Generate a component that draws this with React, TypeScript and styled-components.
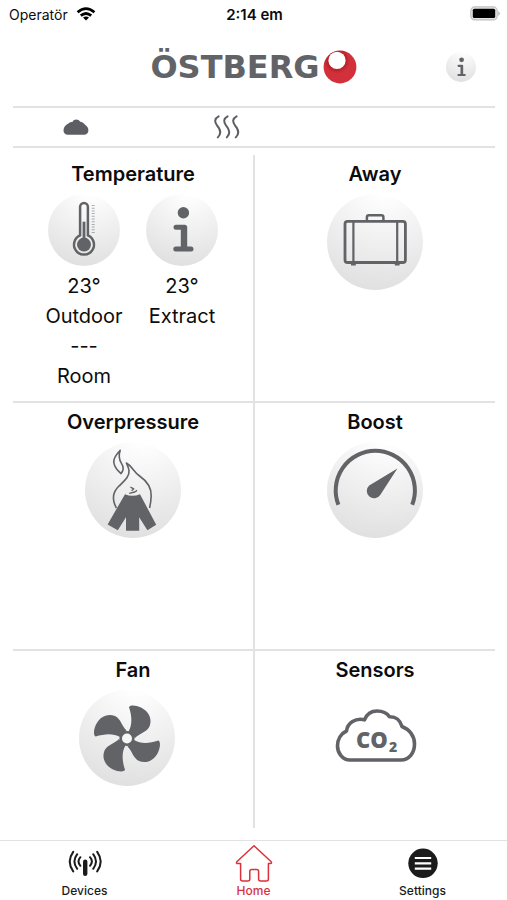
import React from "react";
import styled, { createGlobalStyle } from "styled-components";

const ink = "#626366";
const line = "#e2e2e2";
const red = "#d9323b";

const GlobalStyle = createGlobalStyle`
  *, *::before, *::after { box-sizing: border-box; }
  body {
    margin: 0;
    background: #fff;
    color: #0c0c0d;
    font-family: Inter, "Liberation Sans", sans-serif;
  }
  button { font: inherit; color: inherit; }
  svg { display: block; }
`;

const Screen = styled.div`
  display: flex;
  flex-direction: column;
  min-height: 100vh;
  background: #fff;
`;

const StatusBar = styled.div`
  display: grid;
  grid-template-columns: 1fr auto 1fr;
  align-items: center;
  height: 28px;
  padding: 0 7px 0 9px;
  font-size: 14px;
`;

const Carrier = styled.div`
  display: flex;
  align-items: center;
  gap: 8px;
`;

const Time = styled.time`
  font-size: 15px;
  font-weight: 600;
`;

const BatterySlot = styled.div`
  justify-self: end;
`;

const Header = styled.header`
  display: grid;
  grid-template-columns: 1fr auto 1fr;
  align-items: center;
  height: 78px;
  padding: 0 31px;
`;

const Logo = styled.h1`
  display: flex;
  align-items: center;
  gap: 3px;
  grid-column: 2;
  margin: 0;
  color: ${ink};
  font: bold 32px/34px "DejaVu Sans", sans-serif;
`;

const Disc = styled.span<{ $size: number; $plain?: boolean }>`
  display: block;
  width: ${(p) => p.$size}px;
  height: ${(p) => p.$size}px;
  border-radius: 50%;
  background: ${(p) =>
    p.$plain ? "none" : "radial-gradient(circle at 60% -10%, #fff 8%, #f0f0f1 48%, #dadadb 104%)"};
`;

const DiscButton = styled(Disc).attrs({ as: "button", type: "button" })`
  padding: 0;
  border: 0;
  cursor: pointer;
`;

const InfoSlot = styled.div`
  justify-self: end;
`;

const Main = styled.main`
  padding: 0 12px 0 13px;
`;

const Indicators = styled.div`
  display: flex;
  align-items: center;
  gap: 125px;
  height: 42px;
  padding-left: 50px;
  border-top: 2px solid ${line};
  border-bottom: 2px solid ${line};
`;

const Tiles = styled.div`
  display: grid;
  grid-template-columns: 1fr 1fr;
  gap: 2px;
  margin-top: 7px;
  background: ${line};
`;

const Tile = styled.section<{ $last?: boolean }>`
  display: flex;
  flex-direction: column;
  align-items: center;
  gap: 5px;
  min-height: ${(p) => (p.$last ? 177 : 246)}px;
  padding-top: 4px;
  background: #fff;
`;

const TileTitle = styled.h2`
  margin: 0;
  font-size: 20px;
  line-height: 30px;
  font-weight: 600;
`;

const FanRow = styled.div`
  padding-right: 12px;
`;

const Readings = styled.div`
  display: grid;
  grid-template-columns: 98px 98px;
`;

const Sensor = styled.div`
  display: flex;
  flex-direction: column;
  align-items: center;
`;

const Values = styled.div`
  margin-top: 5px;
  font-size: 20px;
  line-height: 30px;
  text-align: center;
`;

const TabBar = styled.nav`
  display: grid;
  grid-template-columns: repeat(3, 1fr);
  margin-top: auto;
  padding-top: 3px;
  border-top: 1px solid ${line};
`;

const Tab = styled.button<{ $active?: boolean }>`
  display: flex;
  flex-direction: column;
  align-items: center;
  padding: 0;
  border: 0;
  background: none;
  color: ${(p) => (p.$active ? red : "#1b1b1c")};
  font-size: 12px;
  line-height: 18px;
  font-weight: 500;
  cursor: pointer;
`;

const Wifi = () => (
  <svg width="20" height="14" viewBox="0 0 20 14" fill="none" stroke="#000" strokeWidth="2.8" aria-hidden="true">
    <path d="M1.6 5.2Q10 -2 18.4 5.2" />
    <path d="M4.8 8.7Q10 4.4 15.2 8.7" />
    <path d="M10 13.4L7 10.6Q10 8.3 13 10.6Z" fill="#000" stroke="none" />
  </svg>
);

const Battery = () => (
  <svg width="30" height="16" viewBox="0 0 30 16" aria-label="Battery full">
    <rect x="0.8" y="0.9" width="26.4" height="13" rx="4" fill="#e4e4e4" stroke="#c0c0c0" strokeWidth="1.2" />
    <rect x="2.8" y="2.7" width="22.4" height="9.4" rx="1.6" fill="#000" />
    <path d="M28.4 5Q31 7.4 28.4 9.9Z" fill="#a8a8a8" />
  </svg>
);

const Ball = () => (
  <svg width="34" height="34" viewBox="0 0 34 34" aria-hidden="true">
    <defs>
      <radialGradient id="ball" cx="0.4" cy="0.3" r="0.4">
        <stop offset="0.6" stopColor="#b01d25" />
        <stop offset="1" stopColor="#d2303a" />
      </radialGradient>
    </defs>
    <circle cx="17" cy="17" r="16.4" fill="url(#ball)" />
    <circle cx="14" cy="10.4" r="8.6" fill="#fff" />
  </svg>
);

const InfoGlyph = ({ size }: { size: number }) => (
  <svg width={size} height={size} viewBox="0 0 72 72" fill="none" stroke={ink} aria-hidden="true">
    <circle cx="37.4" cy="18.8" r="5.7" fill={ink} stroke="none" />
    <path d="M30 33.2H38.6M29.8 55H45" strokeWidth="5" strokeLinecap="round" />
    <path d="M38 32.6V55" strokeWidth="6.4" />
  </svg>
);

const Thermometer = () => (
  <svg width="72" height="72" viewBox="0 0 72 72" fill="none" stroke={ink} aria-hidden="true">
    <path d="M32.1 41.4V12.8a3.9 3.9 0 0 1 7.8 0V41.4A10 10 0 1 1 32.1 41.4Z" strokeWidth="2.5" />
    <circle cx="36" cy="50.6" r="7" fill={ink} stroke="none" />
    <path d="M36 27.7V46" strokeWidth="2.8" />
    <path d="M45.2 11V39" strokeWidth="3" strokeDasharray="1 1.7" opacity="0.5" />
  </svg>
);

const Suitcase = () => (
  <svg width="96" height="96" viewBox="0 0 96 96" fill="none" stroke={ink} aria-hidden="true">
    <rect x="18" y="27.3" width="60.4" height="41.2" rx="2.6" strokeWidth="2.8" />
    <path d="M26.4 27.5V68.5M70.2 27.5V68.5" strokeWidth="2.2" />
    <path d="M39.9 26.6V23.2a2 2 0 0 1 2-2H54.4a2 2 0 0 1 2 2V26.6" strokeWidth="2.5" />
    <path d="M24 70.5H28.8M67.8 70.5H72.6" strokeWidth="1.8" />
  </svg>
);

const Campfire = () => (
  <svg width="96" height="96" viewBox="0 0 96 96" fill="none" stroke={ink} strokeWidth="1.6" strokeLinejoin="round" aria-hidden="true">
    <path d="M35.2 8.2C33 11 28.6 14.5 28.8 20C29 26 33.5 28.8 35.8 31.6C38.2 29 39 25.2 36.6 21.6C33.8 17.4 33.4 13.5 35.2 8.2Z" />
    <path d="M31.4 66C26.5 57 28.5 49.5 33.5 44.5C38.5 39.5 44.8 35 44 28.5C43.7 25.5 42.4 23.2 41.4 21C47 24 48.5 29.5 54 33.5C61.5 38.8 66.6 46.5 66.2 54C66 59 65.3 63 64.6 66" />
    <path d="M45.4 45.2L48.8 46.8L46.6 48.8M44.2 51.4L49.8 50L52 48.4" strokeWidth="1.3" />
    <path
      d="M40 52.2Q47.5 55.2 55 52.2L71.2 82.8L62.4 88.2L54.2 75.2V88.8H41V75.2L32.8 88.2L22.6 82.4Z"
      fill={ink}
      stroke="none"
    />
  </svg>
);

const Gauge = () => (
  <svg width="96" height="96" viewBox="0 0 96 96" aria-hidden="true">
    <path d="M11.4 62.8A39.6 39.6 0 1 1 85.2 62.8" fill="none" stroke={ink} strokeWidth="4" />
    <path d="M70.4 26.6L53.2 53A7.3 7.3 0 1 1 42.2 43.6Z" fill={ink} />
  </svg>
);

const Fan = () => (
  <svg width="96" height="96" viewBox="0 0 96 96" aria-hidden="true">
    {[0, 90, 180, 270].map((angle) => (
      <path
        key={angle}
        transform={`rotate(${angle} 48 48.5)`}
        d="M50 17.2C50.6 14.8 57 15 62 17.5C70 21.5 73.5 29 70.5 36.5C67.5 42.5 60 43.5 56 48L49.5 41.5C53.5 35 53 26 50 17.2Z"
        fill={ink}
      />
    ))}
    <circle cx="48" cy="48.5" r="7.6" fill={ink} />
    <circle cx="48" cy="48.5" r="5" fill="#f6f6f6" />
  </svg>
);

const CarbonDioxide = () => (
  <svg width="96" height="96" viewBox="0 0 96 96" aria-hidden="true">
    <path
      d="M23 70C15 70 10.5 62.5 10.5 56C10.5 49.5 14 43.5 19.5 41C20.5 33 28.5 27.5 37.5 29.8C40 23.5 45 21 50 21C55.5 21 60 23 62.5 26.8C69 26.5 73.5 31 75 36.5C82.5 39.5 87.5 46 87.5 54C87.5 63 82 70 74 70Z"
      fill="none"
      stroke={ink}
      strokeWidth="3.6"
      strokeLinejoin="round"
    />
    <g fill={ink} fontFamily="'Open Sans', 'Noto Sans', sans-serif" fontWeight="800">
      <text x="29" y="58" fontSize="22">CO</text>
      <text x="62" y="62" fontSize="14">2</text>
    </g>
  </svg>
);

const Cloud = () => (
  <svg width="26" height="16" viewBox="0 0 26 16" fill="#5d5e64" aria-label="Outdoor air">
    <path d="M5 15.8C2.2 15.8 0.5 13.8 0.5 11.4C0.5 8 3 5.6 5.8 4.2C7 3.2 8.2 3 9.4 3C10.4 1.2 11.6 0.5 13.2 0.5C14.8 0.5 16.2 1.2 17.2 2.8C19.4 3 20.8 4 21.8 5.6C24 7 25.4 9 25.4 11.4C25.4 13.8 23.6 15.8 21 15.8Z" />
  </svg>
);

const Heat = () => (
  <svg width="26" height="24" viewBox="0 0 26 24" fill="none" stroke="#5d5e64" strokeWidth="2" strokeLinecap="round" aria-label="Heating">
    {[0, 9, 18].map((x) => (
      <path key={x} transform={`translate(${x} 0)`} d="M4.6 1.4C0.4 3.6 0.4 7 3 10.4C6.6 14.6 8 18.4 3.8 22.4" />
    ))}
  </svg>
);

const Antenna = () => (
  <svg width="40" height="38" viewBox="0 0 40 38" fill="none" stroke="currentColor" strokeWidth="2" strokeLinecap="round" aria-hidden="true">
    <path d="M8.2 7.8Q1.2 17.6 8.2 27.4M12.2 10.2Q6.6 17.6 12.2 24.8M15.4 13.2Q11.6 17.6 15.4 21.8" />
    <path d="M32.2 7.8Q39.2 17.6 32.2 27.4M28.2 10.2Q33.8 17.6 28.2 24.8M25 13.2Q28.8 17.6 25 21.8" />
    <path d="M20.2 17.8V29.8" strokeWidth="4.4" />
  </svg>
);

const House = () => (
  <svg width="40" height="38" viewBox="0 0 40 38" fill="none" stroke="currentColor" strokeWidth="1.5" strokeLinejoin="round" aria-hidden="true">
    <path d="M20 1.8L37.2 17.8Q38.2 19.4 36.4 19.6H34.4V35Q34.4 37 32.4 37H26.6Q24.6 37 24.6 35V27.4Q24.6 25.4 22.6 25.4H17.8Q15.8 25.4 15.8 27.4V35Q15.8 37 13.8 37H8.6Q6.6 37 6.6 35V19.6H3.8Q1.8 19.4 2.8 17.8Z" />
  </svg>
);

const Menu = () => (
  <svg width="40" height="38" viewBox="0 0 40 38" aria-hidden="true">
    <circle cx="20" cy="19.3" r="14.7" fill="currentColor" />
    <path d="M11.8 14H28.2M11.8 19.3H28.2M11.8 24.6H28.2" stroke="#fff" strokeWidth="2.2" />
  </svg>
);

const tiles = [
  { title: "Away", icon: <Suitcase /> },
  { title: "Overpressure", icon: <Campfire /> },
  { title: "Boost", icon: <Gauge /> },
];

const tabs = [
  { label: "Devices", icon: <Antenna /> },
  { label: "Home", icon: <House />, active: true },
  { label: "Settings", icon: <Menu /> },
];

export default function App() {
  return (
    <>
      <GlobalStyle />
      <Screen>
        <StatusBar>
          <Carrier>
            Operatör
            <Wifi />
          </Carrier>
          <Time>2:14 em</Time>
          <BatterySlot>
            <Battery />
          </BatterySlot>
        </StatusBar>

        <Header>
          <Logo>
            ÖSTBERG
            <Ball />
          </Logo>
          <InfoSlot>
            <DiscButton $size={30} aria-label="Information">
              <InfoGlyph size={30} />
            </DiscButton>
          </InfoSlot>
        </Header>

        <Main>
          <Indicators>
            <Cloud />
            <Heat />
          </Indicators>

          <Tiles>
            <Tile>
              <TileTitle>Temperature</TileTitle>
              <Readings>
                <Sensor>
                  <Disc $size={72}>
                    <Thermometer />
                  </Disc>
                  <Values>
                    <div>23°</div>
                    <div>Outdoor</div>
                    <div>---</div>
                    <div>Room</div>
                  </Values>
                </Sensor>
                <Sensor>
                  <Disc $size={72}>
                    <InfoGlyph size={72} />
                  </Disc>
                  <Values>
                    <div>23°</div>
                    <div>Extract</div>
                  </Values>
                </Sensor>
              </Readings>
            </Tile>

            {tiles.map((tile) => (
              <Tile key={tile.title}>
                <TileTitle>{tile.title}</TileTitle>
                <DiscButton $size={96} aria-label={tile.title}>
                  {tile.icon}
                </DiscButton>
              </Tile>
            ))}

            <Tile $last>
              <TileTitle>Fan</TileTitle>
              <FanRow>
                <DiscButton $size={96} aria-label="Fan">
                  <Fan />
                </DiscButton>
              </FanRow>
            </Tile>

            <Tile $last>
              <TileTitle>Sensors</TileTitle>
              <DiscButton $size={96} $plain aria-label="Sensors">
                <CarbonDioxide />
              </DiscButton>
            </Tile>
          </Tiles>
        </Main>

        <TabBar>
          {tabs.map((tab) => (
            <Tab key={tab.label} type="button" $active={tab.active} aria-current={tab.active ? "page" : undefined}>
              {tab.icon}
              {tab.label}
            </Tab>
          ))}
        </TabBar>
      </Screen>
    </>
  );
}
